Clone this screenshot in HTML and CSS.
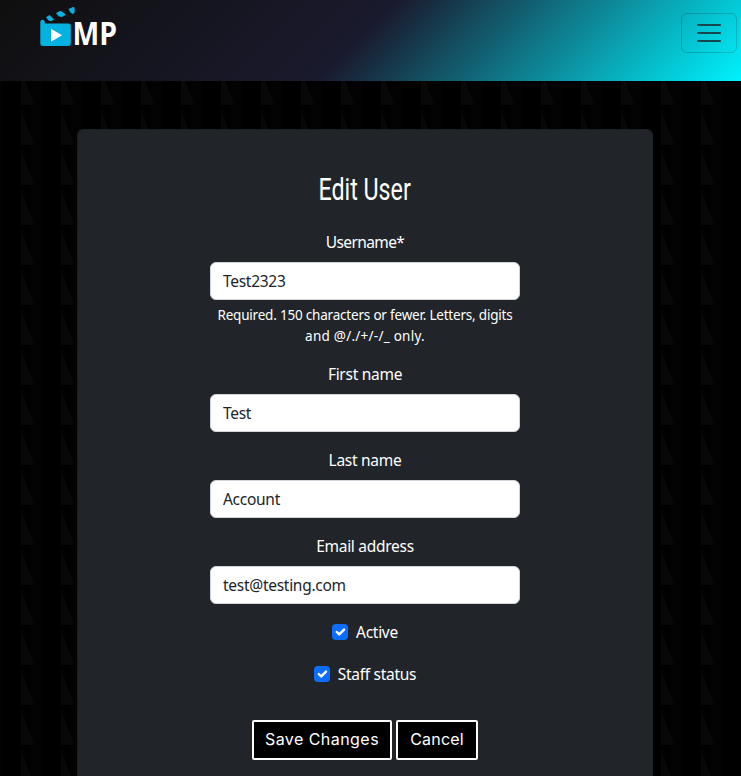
FILE: index.html
```html
<!DOCTYPE html>
<html lang="en">
<head>
<meta charset="utf-8">
<title>Edit User</title>
<link rel="stylesheet" href="styles.css">
</head>
<body>
<svg class="backdrop" aria-hidden="true">
  <defs>
    <pattern id="spikes" width="40" height="40" patternUnits="userSpaceOnUse" x="21" y="29">
      <rect x="10" width="10" height="40" fill="#030303"/>
      <path d="M0 0 13 36H0Z" fill="#080808"/>
    </pattern>
  </defs>
  <rect width="100%" height="100%" fill="url(#spikes)"/>
</svg>
<header class="navbar">
  <a class="brand" href="#">
    <svg width="80" height="44" viewBox="0 0 80 44">
      <g fill="#04b2e2">
        <path d="M1.300 14q0-2 2-2.500 2 0 2.500 2.500V15.500H29.500q2.300 0 2.300 2.300V35.700q0 2.300-2.300 2.300H3.600Q1.300 38 1.300 35.700Z"/>
        <path d="M7 9.300 10.500 7 15 11.500 12 13.200 9.500 12.500ZM17 5 21.500 2.700 27 6.500 23 9 19.500 8.200ZM29.500 1 34-1 35.500-.5V5L33.500 6 31.500 4.500Z"/>
      </g>
      <path d="M12 20.800 23 27.200 12 33.800Z" fill="#fff"/>
      <text class="brand-name" x="33.500" y="36.500" textLength="44.500" lengthAdjust="spacingAndGlyphs">MP</text>
    </svg>
  </a>
  <button class="toggler" aria-label="Menu">
    <svg width="30" height="30" viewBox="0 0 30 30"><path d="M4 7h22M4 15h22M4 23h22" stroke="#16464f" stroke-width="2" stroke-linecap="round"/></svg>
  </button>
</header>
<main class="card">
  <h1><span>Edit User</span></h1>
  <form class="form">
    <div class="field">
      <label class="tight" for="username">Username*</label>
      <input id="username" type="text" value="Test2323">
      <p class="hint">Required. 150 characters or fewer. Letters, digits<br><span class="loose">and @/./+/-/_ only.</span></p>
    </div>
    <div class="field">
      <label for="first">First name</label>
      <input id="first" type="text" value="Test">
    </div>
    <div class="field">
      <label for="last">Last name</label>
      <input id="last" type="text" value="Account">
    </div>
    <div class="field">
      <label for="email">Email address</label>
      <input id="email" type="text" value="test@testing.com">
    </div>
    <div class="check">
      <svg class="box" viewBox="0 0 20 20"><path d="m6 10 3 3 6-6"/></svg><span>Active</span>
    </div>
    <div class="check">
      <svg class="box" viewBox="0 0 20 20"><path d="m6 10 3 3 6-6"/></svg><span>Staff status</span>
    </div>
    <div class="actions">
      <button class="btn save" type="button">Save Changes</button>
      <button class="btn cancel" type="button">Cancel</button>
    </div>
  </form>
</main>
</body>
</html>
```
FILE: styles.css
```css
* { box-sizing: border-box; }
html { background: #000; }
body {
  margin: 0;
  height: 776px;
  overflow: hidden;
  color: #fff;
  font: 15.5px/24px "Noto Sans", "Open Sans", sans-serif;
  letter-spacing: -0.28px;
}
.backdrop {
  position: absolute;
  inset: 0;
  z-index: -1;
  width: 100%;
  height: 100%;
}
.navbar {
  display: flex;
  justify-content: space-between;
  align-items: flex-start;
  height: 81px;
  padding: 8px 4px 0 39px;
  background: linear-gradient(135deg, #0f0f0f 0%, #1a1a2e 48.5%, #00f2fe 100%);
}
.brand svg { display: block; overflow: visible; }
.brand-name { font: 700 33px "Open Sans", sans-serif; letter-spacing: 0; fill: #fff; }
.toggler {
  width: 56px;
  height: 40px;
  margin-top: 5px;
  padding: 4px 12px;
  border: 1px solid rgba(0, 0, 0, .18);
  border-radius: 6px;
  background: none;
}
.toggler svg { display: block; }
.card {
  width: 576px;
  height: 647px;
  margin: 48px 0 0 77px;
  padding-top: 41px;
  border: 1px solid #1c1f23;
  border-bottom: 0;
  border-radius: 6px 6px 0 0;
  background: #212529;
}
h1 {
  margin: 0 0 21px;
  font: 400 31px/38px Roboto, sans-serif;
  letter-spacing: 0;
  text-align: center;
}
h1 span { display: inline-block; transform: scaleX(.75); }
.form { width: 310px; margin: 0 auto; }
.field { margin-bottom: 16px; text-align: center; }
label { display: block; margin-bottom: 8px; }
.tight { letter-spacing: -.6px; }
input {
  display: block;
  width: 100%;
  height: 38px;
  padding: 6px 12px;
  border: 1px solid #ced4da;
  border-radius: 6px;
  background: #fff;
  color: #212529;
  font: inherit;
  letter-spacing: inherit;
}
.hint { margin: 5px 0 -1px; font-size: 13.5px; letter-spacing: -.2px; line-height: 21px; white-space: nowrap; }
.loose { letter-spacing: .25px; }
.check {
  display: flex;
  justify-content: center;
  align-items: center;
  gap: 8px;
  height: 24px;
  margin-bottom: 18px;
}
.box { width: 16px; height: 16px; border-radius: 4px; background: #0d6efd; }
.box path { fill: none; stroke: #fff; stroke-width: 3; stroke-linecap: round; stroke-linejoin: round; }
.actions { display: flex; justify-content: center; gap: 4px; margin-top: 34px; }
.btn {
  height: 40px;
  padding: 0 0 3px;
  border: 2px solid #fff;
  border-radius: 2px;
  background: #000;
  color: #fff;
  font: 400 16px/24px Inter, sans-serif;
}
.save { width: 140px; letter-spacing: .45px; }
.cancel { width: 82px; letter-spacing: .2px; }
```
